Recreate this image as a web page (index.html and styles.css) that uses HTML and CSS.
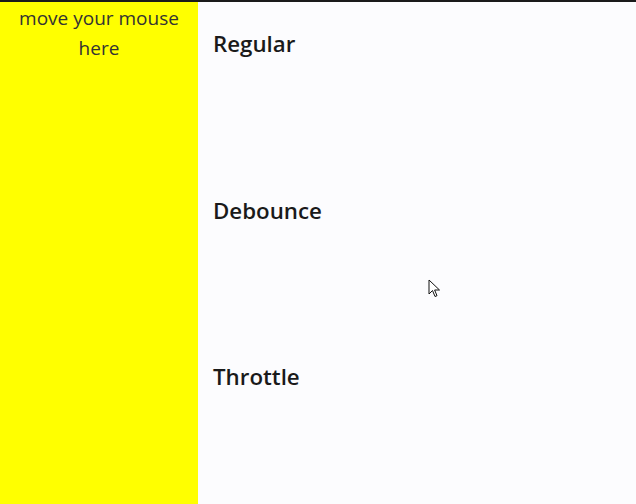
FILE: index.html
```html
<!DOCTYPE html>
<html>
<head>
<meta charset="utf-8">
<link rel="stylesheet" href="styles.css">
</head>
<body>
<div class="page">
  <div class="pad">move your mouse here</div>
  <div class="results">
    <section class="row"><h2>Regular</h2></section>
    <section class="row"><h2>Debounce</h2></section>
    <section class="row"><h2>Throttle</h2></section>
  </div>
</div>
<svg class="cursor" width="14" height="20" viewBox="0 0 14 20">
  <path d="M1 1 L1 15 L4.5 11.5 L7 17.5 L9 16.7 L6.6 11 L11.5 11 Z" fill="#fff" stroke="#111" stroke-width="1" stroke-linejoin="miter"/>
</svg>
</body>
</html>
```
FILE: styles.css
```css
html, body {
  margin: 0;
  padding: 0;
  background: #fcfcfe;
}
body {
  font-family: "Open Sans", "Noto Sans", sans-serif;
  color: #1f1f1f;
  border-top: 2px solid #1a1a1a;
  height: 502px;
  overflow: hidden;
  position: relative;
}
.page {
  display: flex;
  height: 502px;
}
.pad {
  width: 198px;
  box-sizing: border-box;
  flex: none;
  background: #ffff00;
  text-align: center;
  font-size: 19px;
  line-height: 30px;
  padding: 1px 14px 0;
  color: #333;
}
.results {
  flex: 1;
  display: flex;
  flex-direction: column;
}
.row {
  height: 166.6px;
  padding-left: 15px;
}
.row h2 {
  margin: 0;
  padding-top: 27px;
  font-size: 22.3px;
  line-height: 30px;
  font-weight: 600;
  color: #1a1a1a;
}
.cursor {
  position: absolute;
  left: 428px;
  top: 277px;
}
```
